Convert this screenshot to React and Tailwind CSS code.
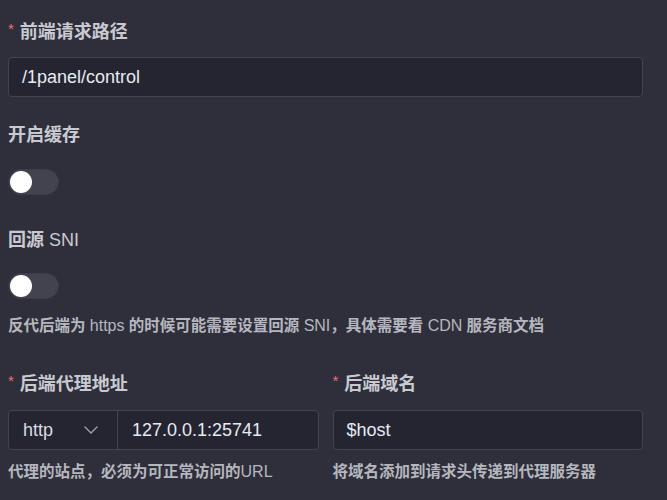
import { ChevronDown } from "lucide-react";

const font = { fontFamily: '"Liberation Sans", "Noto Sans CJK SC", Arial, sans-serif' };

function Label({ required, children, className = "" }) {
  return (
    <div className={`flex items-center h-[22px] leading-[22px] ${className}`}>
      {required && <span className="text-[#f56c6c] text-[15px] font-normal mr-[6px] mt-[-6px]">*</span>}
      <span className="text-[18px] font-bold text-[#c9cad1]">{children}</span>
    </div>
  );
}

function Toggle({ className = "" }) {
  return (
    <div className={`relative w-[51px] h-[26px] rounded-full bg-[#42434f] border border-[#3b3c48] ${className}`}>
      <div className="absolute left-[1px] top-[1px] w-[22px] h-[22px] rounded-full bg-white" />
    </div>
  );
}

function Help({ children, className = "" }) {
  return <div className={`text-[15.5px] leading-[20px] font-semibold text-[#b6b7be] ${className}`}>{children}</div>;
}

const latin = "font-normal";
const helpLatin = "font-normal text-[16px]";

export default function App() {
  return (
    <div style={font} className="min-h-screen w-[667px] bg-[#2e2f3b] pl-2 pr-6 pt-[21px] pb-6 flex flex-col">
      {/* request path */}
      <Label required>前端请求路径</Label>
      <div className="mt-[14px] h-10 rounded-[4px] border border-[#43444f] bg-[#242530] px-[13px] flex items-center text-[18px] text-[#e6eaf2]">
        /1panel/control
      </div>

      <Label className="mt-[27px]">开启缓存</Label>
      <Toggle className="mt-[23px]" />

      <Label className="mt-[34px]">
        回源 <span className={latin}>SNI</span>
      </Label>
      <Toggle className="mt-[22px]" />

      <Help className="mt-[17px]">
        反代后端为 <span className={helpLatin}>https</span> 的时候可能需要设置回源 <span className={helpLatin}>SNI</span>，具体需要看{" "}
        <span className={helpLatin}>CDN</span> 服务商文档
      </Help>

      <div className="mt-[37px] grid grid-cols-2 gap-[14px]">
        <div className="flex flex-col">
          <Label required>后端代理地址</Label>
          <div className="mt-[15px] h-10 rounded-[4px] border border-[#43444f] bg-[#242530] flex text-[18px] text-[#e6eaf2]">
            <div className="w-[109px] border-r border-[#43444f] flex items-center justify-between pl-[14px] pr-[14px] text-[#d8dbe2]">
              <span>http</span>
              <ChevronDown className="w-6 h-6 text-[#a3a5ae]" strokeWidth={1.3} />
            </div>
            <div className="flex-1 flex items-center pl-[14px]">127.0.0.1:25741</div>
          </div>
          <Help className="mt-3">
            代理的站点，必须为可正常访问的<span className={helpLatin}>URL</span>
          </Help>
        </div>
        <div className="flex flex-col">
          <Label required>后端域名</Label>
          <div className="mt-[15px] h-10 rounded-[4px] border border-[#43444f] bg-[#242530] px-[13px] flex items-center text-[18px] text-[#e6eaf2]">
            $host
          </div>
          <Help className="mt-3">将域名添加到请求头传递到代理服务器</Help>
        </div>
      </div>
    </div>
  );
}
